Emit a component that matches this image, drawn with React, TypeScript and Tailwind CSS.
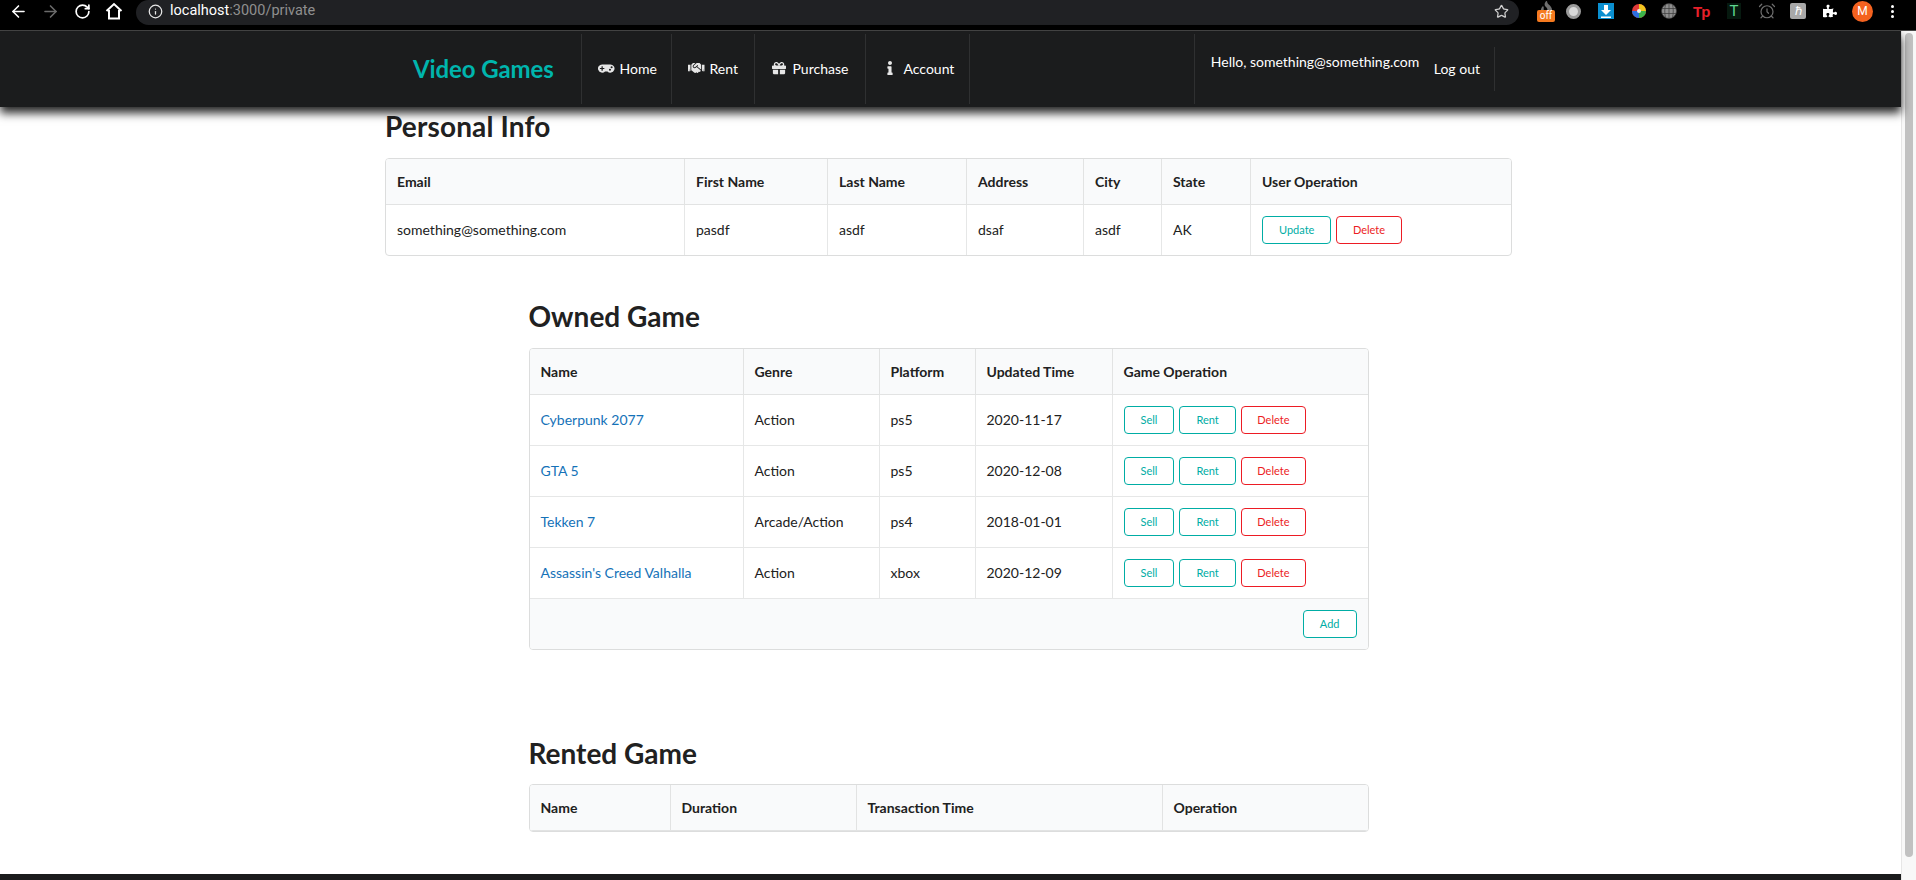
import { AlarmClock, ArrowLeft, ArrowRight, Info, RotateCw, Star } from 'lucide-react'
import { FaFire, FaGamepad, FaGift, FaHandshake, FaInfo, FaPuzzlePiece } from 'react-icons/fa'

const ownedGames = [
  { name: 'Cyberpunk 2077', genre: 'Action', platform: 'ps5', updated: '2020-11-17' },
  { name: 'GTA 5', genre: 'Action', platform: 'ps5', updated: '2020-12-08' },
  { name: 'Tekken 7', genre: 'Arcade/Action', platform: 'ps4', updated: '2018-01-01' },
  { name: "Assassin's Creed Valhalla", genre: 'Action', platform: 'xbox', updated: '2020-12-09' },
]

const navItems = [
  { label: 'Home', w: 'w-[90px]', icon: <FaGamepad size={17} /> },
  { label: 'Rent', w: 'w-[83px]', icon: <FaHandshake size={18} /> },
  { label: 'Purchase', w: 'w-[111px]', icon: <FaGift size={14} /> },
  { label: 'Account', w: 'w-[104px]', icon: <FaInfo size={14} /> },
]

function TealButton({ children }: { children: React.ReactNode }) {
  return (
    <button className="h-[28px] rounded-[4px] border border-[#00ada5] bg-white px-[16px] text-[11px] text-[#00ada5]">
      {children}
    </button>
  )
}

function RedButton() {
  return (
    <button className="h-[28px] rounded-[4px] border border-[#ec1c24] bg-white px-[15.5px] text-[11px] text-[#ec1c24]">
      Delete
    </button>
  )
}

function Th({ children, w, first }: { children: React.ReactNode; w: string; first?: boolean }) {
  return (
    <th
      className={`h-[46px] border-b border-[#e2e3e3] bg-[#f9fafb] px-[11px] text-left font-bold ${w} ${
        first ? '' : 'border-l'
      }`}
    >
      {children}
    </th>
  )
}

function Td({ children, first, last }: { children: React.ReactNode; first?: boolean; last?: boolean }) {
  return (
    <td
      className={`px-[11px] pb-[2px] border-[#e6e7e7] ${first ? '' : 'border-l'} ${
        last ? 'h-[50px]' : 'h-[51px] border-b'
      }`}
    >
      {children}
    </td>
  )
}

function TableBox({ children }: { children: React.ReactNode }) {
  return (
    <div className="overflow-hidden rounded-[4px] border border-[#dcdddd]">
      <table className="w-full table-fixed border-separate border-spacing-0">{children}</table>
    </div>
  )
}

function BrowserBar() {
  return (
    <div className="flex h-[31px] shrink-0 items-start border-b border-[#474747] bg-black">
      <div className="flex h-[22px] w-[136px] shrink-0 items-center text-white">
        <ArrowLeft size={19} strokeWidth={2} className="ml-[9px]" />
        <ArrowRight size={19} strokeWidth={2} className="ml-[13px] text-[#6b6b6b]" />
        <RotateCw size={17} strokeWidth={2.4} className="ml-[14px]" />
        <svg width="18" height="18" viewBox="0 0 18 18" className="ml-[14px]" fill="none" stroke="white" strokeWidth="2">
          <path d="M1.5 9 9 2l7.5 7M4 8v8.5h10V8" />
        </svg>
      </div>
      <div className="flex h-[25px] w-[1383px] shrink-0 items-center rounded-r-full rounded-l-full bg-[#202124] pb-[3px] pl-[12px] pr-[10px] font-['Roboto',sans-serif] text-[14.5px]">
        <Info size={15} strokeWidth={2} className="text-[#e8e8e8]" />
        <span className="ml-[7px] text-white">localhost</span>
        <span className="text-[#8f8f8f]">:3000/private</span>
        <Star size={15} strokeWidth={2} className="ml-auto text-[#d0d0d0]" />
      </div>
      <div className="flex h-[22px] flex-1 items-center pl-[13px]">
        <div className="relative flex w-[28px] justify-center">
          <FaFire size={15} className="mb-[6px] text-[#6e6e6e]" />
          <span className="absolute left-[5px] top-[9px] flex h-[12px] w-[18px] items-center justify-center rounded-[2px] bg-[#f57a1f] font-['Roboto',sans-serif] text-[10px] text-white">
            off
          </span>
        </div>
        <div className="ml-[6px] h-[15px] w-[15px] rounded-full border-[3px] border-[#9a9a9a] bg-[#d8d8d8]" />
        <div className="ml-[17px] flex h-[16px] w-[16px] items-center justify-center bg-[#0a8fd0]">
          <svg width="10" height="13" viewBox="0 0 10 13" fill="white">
            <path d="M3 0h4v5h3L5 10 0 5h3zM0 11.5h10V13H0z" />
          </svg>
        </div>
        <svg width="16" height="16" viewBox="0 0 16 16" className="ml-[17px]">
          <circle cx="8" cy="8" r="7" fill="#e03a3a" />
          <path d="M8 8V1a7 7 0 0 1 7 7z" fill="#f2c61f" />
          <path d="M8 8h7a7 7 0 0 1-7 7z" fill="#3cb54a" />
          <path d="M8 8v7a7 7 0 0 1-7-7z" fill="#2d6fe0" />
          <circle cx="8" cy="8" r="2" fill="#eee" />
        </svg>
        <svg width="16" height="16" viewBox="0 0 16 16" className="ml-[14px]" fill="#8f8f8f" stroke="#3a3a3a" strokeWidth="0.7">
          <circle cx="8" cy="8" r="7.5" />
          <path d="M8 .5v15M1 5.5h14M1 10.5h14M4.5 1.5c-1 4-1 9 0 13M11.5 1.5c1 4 1 9 0 13" fill="none" />
        </svg>
        <span className="ml-[16px] w-[18px] font-['Liberation_Sans',sans-serif] text-[15px] font-bold leading-none tracking-[-1px] text-[#e8202a]">
          Tp
        </span>
        <span className="ml-[16px] flex h-[16px] w-[14px] items-center justify-center bg-[#06190f] font-['Roboto',sans-serif] text-[15px] text-[#5fd68f]">
          T
        </span>
        <AlarmClock size={18} strokeWidth={1.6} className="ml-[17px] text-[#6f6f6f]" />
        <div className="ml-[14px] flex h-[16px] w-[16px] items-center justify-center rounded-[2px] bg-[#a8a8a8] font-['Liberation_Serif',serif] text-[12px] text-white">
          ℏ
        </div>
        <FaPuzzlePiece size={14} className="ml-[17px] text-white" />
        <div className="ml-[15px] flex h-[21px] w-[21px] items-center justify-center rounded-full bg-[#f4621f] font-['Roboto',sans-serif] text-[12px] text-white">
          M
        </div>
        <div className="ml-[18px] flex flex-col gap-[2px]">
          <span className="h-[3px] w-[3px] rounded-full bg-white" />
          <span className="h-[3px] w-[3px] rounded-full bg-white" />
          <span className="h-[3px] w-[3px] rounded-full bg-white" />
        </div>
      </div>
    </div>
  )
}

function TopNav() {
  return (
    <nav className="relative z-10 flex h-[76px] shrink-0 justify-center bg-[#1b1c1d] text-white shadow-[0_6px_9px_rgba(0,0,0,0.85)]">
      <div className="flex w-[1127px] pr-[19px]">
        <div className="flex w-[194px] items-center pb-[1px] pl-[26px] text-[24px] font-bold tracking-[-0.1px] text-[#00b5ad]">
          Video Games
        </div>
        <div className="my-[3px] flex border-r border-[#2f3031]">
          {navItems.map((item) => (
            <a key={item.label} className={`flex items-center border-l border-[#2f3031] pb-[2px] pl-[16px] ${item.w}`}>
              <span className="mr-[5px] flex w-[16.5px] justify-center text-[#e6e6e6]">{item.icon}</span>
              {item.label}
            </a>
          ))}
        </div>
        <div className="ml-auto flex items-center">
          <div className="my-[3px] flex h-[70px] w-[224px] items-center whitespace-nowrap border-l border-[#2f3031] pb-[15px] pl-[16px]">
            Hello, something@something.com
          </div>
          <a className="flex h-[44px] items-center border-r border-[#2f3031] pb-[2px] pl-[16px] pr-[14px]">Log out</a>
        </div>
      </div>
    </nav>
  )
}

export default function App() {
  return (
    <div className="flex h-[880px] flex-col overflow-hidden bg-white font-['Lato',sans-serif] text-[14px] text-[#212121]">
      <BrowserBar />
      <div className="flex min-h-0 flex-1">
        <div className="flex min-w-0 flex-1 flex-col">
          <TopNav />
          <main className="ml-[385px] w-[1127px] pt-[1px]">
            <h1 className="mb-[14px] h-[36px] text-[28px] font-bold leading-[36px] tracking-[0.15px]">Personal Info</h1>
            <TableBox>
              <thead>
                <tr>
                  <Th first w="w-[298px]">Email</Th>
                  <Th w="w-[143px]">First Name</Th>
                  <Th w="w-[139px]">Last Name</Th>
                  <Th w="w-[117px]">Address</Th>
                  <Th w="w-[78px]">City</Th>
                  <Th w="w-[89px]">State</Th>
                  <Th w="w-[261px]">User Operation</Th>
                </tr>
              </thead>
              <tbody>
                <tr>
                  <Td first last>something@something.com</Td>
                  <Td last>pasdf</Td>
                  <Td last>asdf</Td>
                  <Td last>dsaf</Td>
                  <Td last>asdf</Td>
                  <Td last>AK</Td>
                  <Td last>
                    <div className="mt-[2px] flex gap-[5px]">
                      <TealButton>Update</TealButton>
                      <RedButton />
                    </div>
                  </Td>
                </tr>
              </tbody>
            </TableBox>

            <section className="mx-auto mt-[42px] w-[840px]">
              <h1 className="mb-[14px] h-[36px] text-[28px] font-bold leading-[36px]">Owned Game</h1>
              <TableBox>
                <thead>
                  <tr>
                    <Th first w="w-[213px]">Name</Th>
                    <Th w="w-[136px]">Genre</Th>
                    <Th w="w-[96px]">Platform</Th>
                    <Th w="w-[137px]">Updated Time</Th>
                    <Th w="w-[256px]">Game Operation</Th>
                  </tr>
                </thead>
                <tbody>
                  {ownedGames.map((game) => (
                    <tr key={game.name}>
                      <Td first>
                        <a className="text-[#1572b8]">{game.name}</a>
                      </Td>
                      <Td>{game.genre}</Td>
                      <Td>{game.platform}</Td>
                      <Td>{game.updated}</Td>
                      <Td>
                        <div className="mt-[2px] flex gap-[5px]">
                          <TealButton>Sell</TealButton>
                          <TealButton>Rent</TealButton>
                          <RedButton />
                        </div>
                      </Td>
                    </tr>
                  ))}
                </tbody>
                <tfoot>
                  <tr>
                    <td colSpan={5} className="h-[50px] bg-[#f9fafb] px-[11px] text-right">
                      <TealButton>Add</TealButton>
                    </td>
                  </tr>
                </tfoot>
              </TableBox>
            </section>

            <section className="mx-auto mt-[85px] w-[840px]">
              <h1 className="mb-[13px] h-[36px] text-[28px] font-bold leading-[36px]">Rented Game</h1>
              <TableBox>
                <thead>
                  <tr>
                    <Th first w="w-[140px]">Name</Th>
                    <Th w="w-[186px]">Duration</Th>
                    <Th w="w-[306px]">Transaction Time</Th>
                    <Th w="w-[206px]">Operation</Th>
                  </tr>
                </thead>
              </TableBox>
            </section>
          </main>
          <footer className="mt-[42px] flex-1 bg-[#1b1c1d]" />
        </div>
        <div className="w-[15px] shrink-0 border-l border-[#e6e6e6] bg-[#f8f8f8] pl-[3px] pr-[3px] pt-[2px]">
          <div className="h-[824px] rounded-full bg-[#c1c1c1]" />
        </div>
      </div>
    </div>
  )
}
